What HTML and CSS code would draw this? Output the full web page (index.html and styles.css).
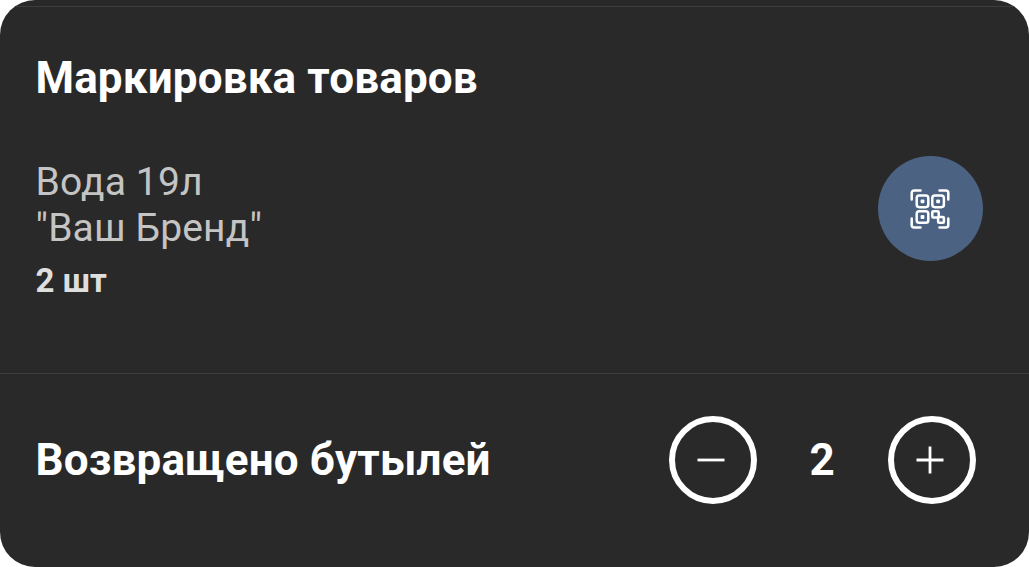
FILE: index.html
```
<!DOCTYPE html>
<html lang="ru">
<head>
    <meta charset="UTF-8">
    <meta name="viewport" content="width=device-width, initial-scale=1.0">
    <title>Маркировка товаров</title>
    <link rel="stylesheet" href="styles.css">
</head>
<body>
    <div class="card">
        <section class="marking">
            <h2 class="title">Маркировка товаров</h2>
            <div class="product">
                <div class="product-info">
                    <div class="product-name">Вода 19л<br>"Ваш Бренд"</div>
                    <div class="product-count">2 шт</div>
                </div>
                <button class="scan-button" aria-label="Сканировать">
                    <svg width="40" height="40" viewBox="0 0 40 40" fill="none" stroke="#fff" stroke-width="2.5" stroke-linecap="round" stroke-linejoin="round">
                        <path d="M1.7 10.5V4a2.5 2.5 0 0 1 2.5-2.5h6.3M29.5 1.5h6.3A2.5 2.5 0 0 1 38.3 4v6.5M38.3 29.5V36a2.5 2.5 0 0 1-2.5 2.5h-6.3M10.5 38.5H4.2A2.5 2.5 0 0 1 1.7 36v-6.5"/>
                        <rect x="6.7" y="6.6" width="11.6" height="11.6" rx="2.6"/>
                        <rect x="22.3" y="6.6" width="11.6" height="11.6" rx="2.6"/>
                        <rect x="6.7" y="22.2" width="11.6" height="11.6" rx="2.6"/>
                        <rect x="22.3" y="22.2" width="6.4" height="6.4" rx="1"/>
                        <rect x="28.1" y="28" width="5.8" height="5.8" rx="1"/>
                        <g fill="#fff" stroke="none">
                            <rect x="10.6" y="10.5" width="3.8" height="3.8" rx="1"/>
                            <rect x="26.2" y="10.5" width="3.8" height="3.8" rx="1"/>
                            <rect x="10.6" y="26.1" width="3.8" height="3.8" rx="1"/>
                        </g>
                    </svg>
                </button>
            </div>
        </section>
        <section class="returned">
            <h2 class="title">Возвращено бутылей</h2>
            <div class="counter">
                <button class="round-button" onclick="changeCount(-1)" aria-label="Меньше">
                    <svg width="28" height="28" viewBox="0 0 28 28" stroke="#fff" stroke-width="2.8">
                        <path d="M0.5 14h27"/>
                    </svg>
                </button>
                <span class="count" id="count">2</span>
                <button class="round-button" onclick="changeCount(1)" aria-label="Больше">
                    <svg width="28" height="28" viewBox="0 0 28 28" stroke="#fff" stroke-width="2.8">
                        <path d="M0.5 14h27M14 0.5v27"/>
                    </svg>
                </button>
            </div>
        </section>
    </div>

    <script>
        const count = document.getElementById('count');

        function changeCount(step) {
            count.textContent = Math.max(0, Number(count.textContent) + step);
        }
    </script>
</body>
</html>
```
FILE: styles.css
```
body {
    margin: 0;
    background-color: #fff;
    font-family: Roboto, "Noto Sans", sans-serif;
}

.card {
    box-sizing: border-box;
    width: 1029px;
    height: 567px;
    padding-top: 6px;
    border-radius: 35px;
    background-color: #292929;
    overflow: hidden;
}

.title {
    margin: 0;
    font-size: 44px;
    font-weight: 700;
    line-height: 52px;
    letter-spacing: 0.15px;
    color: #fff;
    white-space: nowrap;
}

button {
    display: flex;
    justify-content: center;
    align-items: center;
    padding: 0;
    border: none;
    border-radius: 50%;
    cursor: pointer;
}

.marking {
    box-sizing: border-box;
    height: 367px;
    padding: 45px 46px 0 35.5px;
    border-top: 1px solid #3d3d3d;
}

.product {
    display: flex;
    justify-content: space-between;
    align-items: flex-start;
    margin-top: 52px;
}

.product-info {
    padding-top: 3px;
}

.product-name {
    font-size: 39px;
    line-height: 46px;
    letter-spacing: 0.15px;
    color: #c4c4c4;
}

.product-count {
    margin-top: 10px;
    font-size: 33px;
    font-weight: 700;
    line-height: 40px;
    color: #dedede;
}

.scan-button {
    box-sizing: border-box;
    width: 105px;
    height: 105px;
    padding-right: 1px;
    background-color: #4b6282;
}

.returned {
    box-sizing: border-box;
    display: flex;
    justify-content: space-between;
    align-items: center;
    height: 194px;
    padding: 0 53px 21px 35.5px;
    border-top: 1px solid #3d3d3d;
}

.counter {
    display: flex;
    align-items: center;
}

.round-button {
    box-sizing: border-box;
    width: 88px;
    height: 88px;
    padding-right: 4px;
    border: 6px solid #fff;
    background-color: transparent;
}

.count {
    box-sizing: border-box;
    width: 131px;
    padding-right: 1px;
    font-size: 44px;
    font-weight: 700;
    line-height: 52px;
    text-align: center;
    color: #fff;
}
```
